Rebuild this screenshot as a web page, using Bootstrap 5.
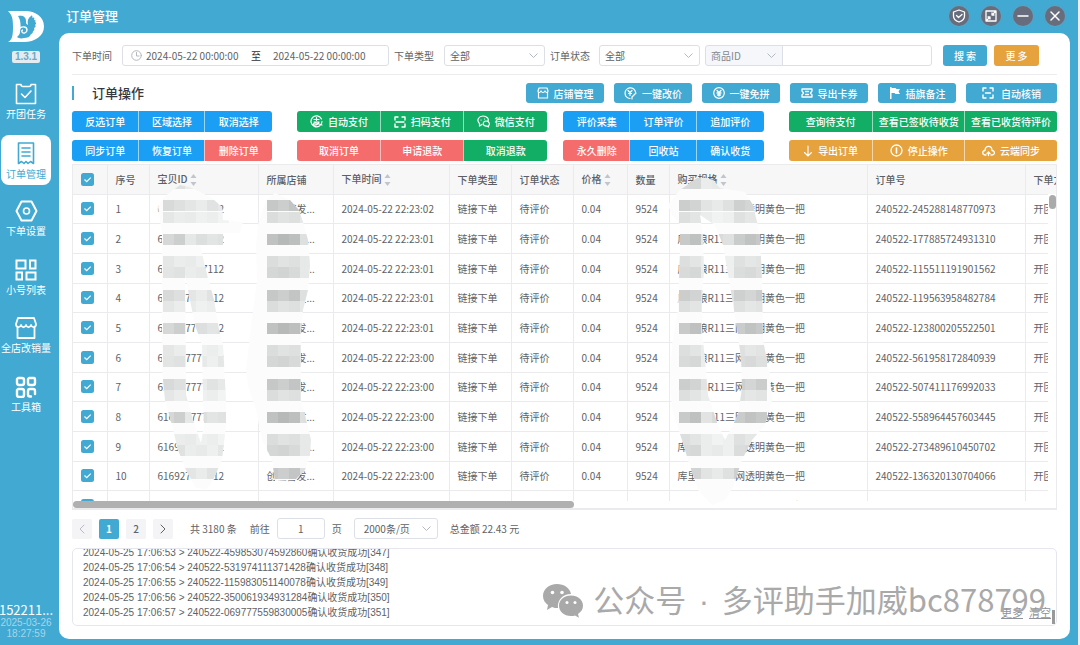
<!DOCTYPE html>
<html lang="zh-CN">
<head>
<meta charset="utf-8">
<meta name="viewport" content="width=device-width, initial-scale=1">
<title>订单管理</title>
<link rel="stylesheet" href="https://cdn.jsdelivr.net/npm/bootstrap@5.3.0/dist/css/bootstrap.min.css">
<style>
:root{--theme:#41a9d2;--line:#ebebed;--txt:#606266}
body{font:10px/15px "Noto Sans CJK SC",sans-serif;color:var(--txt);background:#eceef1}
button,input,select{font-family:inherit}
svg{display:block;flex:none}
.ic{fill:none;stroke:currentColor;stroke-width:1.6;stroke-linejoin:round;stroke-linecap:round}
.shell{min-height:100vh;background:var(--theme);margin-right:2px;overflow:hidden}
.side{width:59px;padding:0 7px 6px 0;color:#fff}
.logo{margin:10px 0 8px}
.ver{font:bold 10px/12px "Liberation Sans",sans-serif;background:#e4ecf1;color:#6aa9c8;border-radius:2px;width:28px}
.menu{height:343px;margin-top:13px}
.menu a{width:50px;height:50px;color:#fff;text-decoration:none;white-space:nowrap;border-radius:8px;line-height:14px;gap:2px;padding-top:7px}
.menu a.active{background:#fff;color:var(--theme)}
.acct{font-size:13px;line-height:14px;font-weight:400;white-space:nowrap}
.stamp{font:10px/11px "Liberation Sans",sans-serif;color:#a5d6ea}
.topbar{height:33px;padding:0 5px 2px 7px;color:#fff}
.topbar h1{font-size:13px;font-weight:500;line-height:18px}
.win{width:20px;height:20px;border-radius:50%;border:0;background:#676d7d;color:#fff;padding:0;box-shadow:0 0 2px #8a99a6}
.panel{background:#fff;border-radius:10px;margin:0 8px 6px 0;padding:12px 13px 13px;min-width:0}
.box,.form-select,.form-control{height:21px;min-height:21px;border:1px solid #dcdfe6;border-radius:3px;font-size:10px;line-height:15px;color:var(--txt);padding:0 5px}
.form-select{padding-right:18px;background-size:9px 9px;background-position:right 6px center;--bs-form-select-bg-img:url("data:image/svg+xml,%3csvg xmlns='http://www.w3.org/2000/svg' viewBox='0 0 9 9'%3e%3cpath fill='none' stroke='%23b4b8c0' d='M.5 2.5l4 4 4-4'/%3e%3c/svg%3e")}
.box input{border:0;padding:0;width:105px;color:var(--txt);outline:0;background:none}
.filters{padding-bottom:8px;border-bottom:1px solid #ececee}
.btn{font-size:10px;line-height:15px;font-weight:500;color:#fff;padding:0;border:0;border-radius:3px;height:21px;display:inline-flex;align-items:center;justify-content:center;gap:5px;white-space:nowrap;background:var(--c,var(--theme))}
.btn:hover{color:#fff;background:var(--c,var(--theme));opacity:.9}
.c-blue{--c:#1b9ff4}.c-green{--c:#12ae66}.c-red{--c:#f56c6c}.c-gold{--c:#e6a23c}
.tools .btn{height:20px;width:78px}
.tools .btn.w-auto2{width:91px;gap:7px}
.sect{font-size:13px;line-height:18px;font-weight:500;color:#35393f;padding-left:18px}
.bar{width:2px;height:14px;background:var(--theme)}
.btn-group>.btn{flex:1 1 0;border-left:1px solid #ffffff90}
.btn-group>.btn:first-child{border-left:0}
.btn-group>.btn.wide{flex-grow:1.1}
.g20{flex:200 1 0}.g25{flex:250 1 0}.g27{flex:268 1 0}
.gap-a{margin-right:25px}.gap-b{margin-right:16px}
.grid-wrap{height:346px;border:1px solid var(--line);border-width:1px 1px 2px;margin-top:3px}
.view{height:336px;overflow:hidden}
.orders{table-layout:fixed;width:1053px;height:356px;margin:0;color:var(--txt)}
.orders th,.orders td{padding:0 0 0 8px;height:29px;border:0;border-right:1px solid var(--line);border-bottom:1px solid var(--line);white-space:nowrap;overflow:hidden;vertical-align:middle;line-height:15px}
.orders th{background:#f7f7f8;font-weight:500;color:#5c5f66}
.orders th svg{display:inline-block;vertical-align:middle;margin-left:2px}
.orders td{font-weight:400}
.form-check-input{width:13px;height:13px;margin:0;float:none;display:block;border-radius:2px;border:0}
.form-check-input:checked[type=checkbox]{background-color:var(--theme);background-size:13px;background-image:url("data:image/svg+xml,%3csvg xmlns='http://www.w3.org/2000/svg' viewBox='0 0 13 13'%3e%3cpath fill='none' stroke='%23fff' stroke-width='1.2' d='M3.5 6.500l2.200 2.200 4-4'/%3e%3c/svg%3e")}
.mask{left:-73px;top:-165px;pointer-events:none}
.gutter{right:0;top:29px;width:8px;height:308px;background:#fff}
.vthumb{right:0;top:30px;width:7px;height:14px;border-radius:4px;background:#aaa}
.hthumb{height:7px;width:51%;border-radius:4px;background:#b0b0b0}
.pg{width:20px;height:20px;border:0;border-radius:2px;background:#f4f4f6;color:#606266;padding:0;font-weight:500;font-size:10px;line-height:20px;display:flex;align-items:center;justify-content:center}
.pg.on{background:var(--theme);color:#fff;font-weight:700}
.log{border:1px solid #e6e7ee;border-radius:5px;min-height:77px;font:10px/15px "Liberation Sans","Noto Sans CJK SC",sans-serif;margin-top:9px;padding:0 9px 4px 10px}
.log-lines{height:71px;overflow:hidden}
.wm{right:10px;bottom:5px;color:#a9a9a9;font:31px/36px "Noto Sans CJK SC",sans-serif;white-space:nowrap;gap:9px}
.wm .dot{font-family:"Liberation Sans",sans-serif;padding:0 4px}
.acts{right:5px;bottom:3px;gap:6px}
.acts a{color:#909399;font-size:11px;line-height:17px;text-decoration:underline}
.lthumb{right:1px;bottom:1px;width:3px;height:14px;background:#999}
</style>
</head>
<body>
<div class="shell d-flex">
  <aside class="side d-flex flex-column align-items-center flex-shrink-0">
    <svg class="logo" width="38" height="33" viewBox="0 0 38 33"><path fill="#fff" d="M1 1h17c11 0 19 6 19 15.500S28 32 17 32H1c4-2 5-6 5-15S5 5 1 1z"/><path fill="#41a9d2" d="M11 6c5-1 8 1 8 5 0 2 0 3 2 4-1-4 0-7 3-9 1-1 2 0 1 2 2-1 3 0 2 2 2 0 2 1 1 2 2 1 1 2 0 3 1 1 1 2-1 3 1 1 0 3-1 3 0 2-1 3-2 3-1 3-4 4-7 4-3 1-6 0-7-1 2-2 3-3 3-5 1-5 1-12-2-16z"/><path d="M12 19c2-3 8-3 8 1 0 3-4 4-5 2s1-2 1-2" fill="none" stroke="#fff" stroke-width="1.400"/></svg>
    <div class="ver text-center">1.3.1</div>
    <nav class="menu d-flex flex-column justify-content-between">
      <a href="#" class="d-flex flex-column align-items-center"><svg class="ic" width="22" height="22" viewBox="0 0 22 22"><path d="M1.500 1.500h4.500a2 2 0 0 0 2 2h6a2 2 0 0 0 2-2h4.500v19h-19zM6.500 11l3.500 3.500L16 8"/></svg>开团任务</a>
      <a href="#" class="active d-flex flex-column align-items-center"><svg class="ic" width="18" height="23" viewBox="0 0 18 23"><path d="M1.500 1h15v20.500l-3-2-2.500 2-2-2-2 2-2.500-2-3 2zM5 6h8M5 10h8M5 14h8"/></svg>订单管理</a>
      <a href="#" class="d-flex flex-column align-items-center"><svg class="ic" width="23" height="22" viewBox="0 0 23 22"><path stroke-width="2" d="M6.500 1.500h10l5 9.500-5 9.500h-10L1.500 11z"/><circle cx="11.500" cy="11" r="3"/></svg>下单设置</a>
      <a href="#" class="d-flex flex-column align-items-center"><svg class="ic" width="22" height="22" viewBox="0 0 22 22"><path stroke-width="2" stroke-linejoin="miter" d="M1.500 1.500h9v8h-9zM15 1.500h5.500v8H15zM1.500 13.500H7v7H1.500zM11.500 13.500h9v7h-9z"/></svg>小号列表</a>
      <a href="#" class="d-flex flex-column align-items-center"><svg class="ic" width="22" height="22" viewBox="0 0 22 22"><path stroke-width="1.800" d="M3 1h16l2 6c0 4-4 4-5 1-1 3-4 3-5 0-1 3-4 3-5 0-1 3-5 3-5-1zM2.500 10v11h17V10"/></svg>全店改销量</a>
      <a href="#" class="d-flex flex-column align-items-center"><svg class="ic" width="22" height="22" viewBox="0 0 22 22"><path stroke-width="2.400" d="M3 2h4q2 0 2 2v3q0 2-2 2H4Q2 9 2 7V3zM14 2h5q1 0 1 2v3q0 2-2 2h-3q-2 0-2-2V3zM3 13h4q2 0 2 2v4q0 2-2 2H4q-2 0-2-2v-5zM16 20.500h-1q-2 0-2-2V15q0-2 2-2h3q2 0 2 2v3"/></svg>工具箱</a>
    </nav>
    <div class="mt-auto text-center">
      <div class="acct">152211...</div>
      <div class="stamp">2025-03-26<br>18:27:59</div>
    </div>
  </aside>

  <div class="flex-grow-1 d-flex flex-column" style="min-width:0">
    <header class="topbar d-flex align-items-center justify-content-between">
      <h1 class="m-0">订单管理</h1>
      <div class="d-flex pe-2" style="gap:12px">
        <button class="win" aria-label="安全"><svg class="ic mx-auto" width="14" height="14" viewBox="0 0 14 14"><path stroke-width="1.300" d="M7 1l5.500 2v4c0 3-2.500 5-5.500 6-3-1-5.500-3-5.500-6V3zM4.500 6.500l2 2 3.500-3"/></svg></button>
        <button class="win" aria-label="缩放"><svg class="ic mx-auto" width="12" height="12" viewBox="0 0 12 12"><path stroke-width="1.300" d="M1 1h10v10H1zM3 7h2v2M9 5H7V3M7 5l3-3M5 7l-3 3"/></svg></button>
        <button class="win" aria-label="最小化"><svg class="ic mx-auto" width="12" height="12" viewBox="0 0 12 12"><path stroke-width="1.500" d="M1 6h10"/></svg></button>
        <button class="win" aria-label="关闭"><svg class="ic mx-auto" width="12" height="12" viewBox="0 0 12 12"><path stroke-width="1.500" d="M2 2l8 8M10 2l-8 8"/></svg></button>
      </div>
    </header>

    <main class="panel flex-grow-1 d-flex flex-column">
      <form class="filters d-flex align-items-center">
        <label for="from">下单时间</label>
        <div class="box d-flex align-items-center" style="margin:0 5px 0 10px;width:267px;padding:0 8px">
          <svg class="ic me-1" width="11" height="11" viewBox="0 0 11 11" style="color:#b4b8c0"><circle cx="5.500" cy="5.500" r="4.800" stroke-width="1"/><path stroke-width="1" d="M5.500 2.500V6H8"/></svg>
          <input id="from" value="2024-05-22 00:00:00"><span class="me-2" style="color:#303133">至</span>
          <input aria-label="结束时间" value="2024-05-22 00:00:00" class="ms-1">
        </div>
        <label for="kind">下单类型</label>
        <select id="kind" class="form-select" style="width:101px;margin:0 5px 0 10px"><option>全部</option></select>
        <label for="state">订单状态</label>
        <select id="state" class="form-select" style="width:101px;margin:0 5px 0 9px"><option>全部</option></select>
        <div class="input-group flex-nowrap" style="width:227px">
          <select class="form-select flex-grow-0" aria-label="搜索字段" style="width:78px;flex-basis:78px;background-color:#f5f7fa;color:#83868c"><option>商品ID</option></select>
          <input class="form-control" aria-label="关键词">
        </div>
        <button type="button" class="btn" style="width:44px;margin-left:11px">搜 索</button>
        <button type="button" class="btn c-gold" style="width:45px;margin-left:7px">更 多</button>
      </form>

      <div class="tools d-flex align-items-center" style="margin:8px 0">
        <span class="bar"></span><h2 class="sect m-0 me-auto">订单操作</h2>
        <div class="d-flex" style="gap:10px">
          <button class="btn"><svg class="ic" width="12" height="12" viewBox="0 0 12 12"><path stroke-width="1.200" d="M1 4l1-3h8l1 3c0 2-2 2-3 0-1 2-3 2-4 0-1 2-3 2-3 0zM1.500 5.500V11h9V5.500"/></svg>店铺管理</button>
          <button class="btn"><svg class="ic" width="13" height="13" viewBox="0 0 13 13"><path stroke-width="1.200" d="M6 11.500A5.300 5.300 0 1 1 11.500 5M4 3.500l2 2 2-2M6 5.500v3M4.500 6.500h3M8 12V10l4-4"/></svg>一键改价</button>
          <button class="btn"><svg class="ic" width="12" height="12" viewBox="0 0 12 12"><circle cx="6" cy="6" r="5.300" stroke-width="1.200"/><path stroke-width="1.300" d="M4 3.500l2 2 2-2M6 5.500v3.500M4 6h4M4.500 8h3"/></svg>一键免拼</button>
          <button class="btn"><svg class="ic" width="12" height="12" viewBox="0 0 12 12"><path stroke-width="1.300" d="M1 2h10v2L9.500 6 11 8v2H1V8l1.500-2L1 4zM4.500 4.500h3M4.500 7.500h3"/></svg>导出卡券</button>
          <button class="btn"><svg width="12" height="12" viewBox="0 0 12 12"><path fill="#fff" d="M1 0h1.500v1h4l1 1H11L9.500 4.500 11 7H6.500l-1-1h-3v6H1z"/></svg>插旗备注</button>
          <button class="btn w-auto2"><svg class="ic" width="12" height="12" viewBox="0 0 12 12"><path stroke-width="1.400" d="M1 4V1h3M8 1h3v3M11 8v3H8M4 11H1V8M3.500 6h5"/></svg>自动核销</button>
        </div>
      </div>

      <div class="d-flex" style="margin-bottom:8px">
        <div class="btn-group g20 gap-a"><button class="btn c-blue">反选订单</button><button class="btn c-blue">区域选择</button><button class="btn c-blue">取消选择</button></div>
        <div class="btn-group g25 gap-b">
          <button class="btn c-green"><svg class="ic" width="13" height="13" viewBox="0 0 13 13"><path stroke-width="1.200" d="M11.500 4A5.500 5.500 0 1 0 12 6.500M4 4.500h5M6.500 2.500v3M4 7h5c-1 3-3 3-4.500 3S3 8 5 8s4 1 7 2"/></svg>自动支付</button>
          <button class="btn c-green"><svg class="ic" width="12" height="12" viewBox="0 0 12 12"><path stroke-width="1.400" d="M1 4V1h3M8 1h3v3M11 8v3H8M4 11H1V8M2 6h8"/></svg>扫码支付</button>
          <button class="btn c-green"><svg class="ic" width="13" height="13" viewBox="0 0 13 13"><path stroke-width="1.200" d="M5 9.500L2.500 11V8.500C-1 5 2 1 6 1s6 3 5 5M4 5h.1M7.500 4h.1M9 6c4 0 4 4 2.500 4.500V12L10 11C5 11.500 5.500 6 9 6z"/></svg>微信支付</button>
        </div>
        <div class="btn-group g20 gap-a"><button class="btn c-blue">评价采集</button><button class="btn c-blue">订单评价</button><button class="btn c-blue">追加评价</button></div>
        <div class="btn-group g27"><button class="btn c-green">查询待支付</button><button class="btn c-green wide">查看已签收待收货</button><button class="btn c-green wide">查看已收货待评价</button></div>
      </div>
      <div class="d-flex">
        <div class="btn-group g20 gap-a"><button class="btn c-blue">同步订单</button><button class="btn c-blue">恢复订单</button><button class="btn c-red">删除订单</button></div>
        <div class="btn-group g25 gap-b"><button class="btn c-red">取消订单</button><button class="btn c-red">申请退款</button><button class="btn c-green">取消退款</button></div>
        <div class="btn-group g20 gap-a"><button class="btn c-red">永久删除</button><button class="btn c-blue">回收站</button><button class="btn c-blue">确认收货</button></div>
        <div class="btn-group g27">
          <button class="btn c-gold"><svg class="ic" width="10" height="12" viewBox="0 0 10 12"><path stroke-width="1.100" d="M5 1v10M1.500 7.500L5 11l3.500-3.500"/></svg>导出订单</button>
          <button class="btn c-gold wide"><svg class="ic" width="13" height="13" viewBox="0 0 13 13"><circle cx="6.500" cy="6.500" r="5.500" stroke-width="1.300"/><path d="M6.500 4v5"/></svg>停止操作</button>
          <button class="btn c-gold wide"><svg class="ic" width="13" height="12" viewBox="0 0 13 12"><path stroke-width="1.300" d="M4 10H3C0 9.500 0 6 3 5.500 3 0 10 0 10 5.500 13.500 6 13 10 10 10H9M6.500 10.500V7M5 8.500L6.500 7 8 8.500"/></svg>云端同步</button>
        </div>
      </div>

      <div class="grid-wrap position-relative overflow-hidden">
        <div class="view">
          <table class="table orders">
            <colgroup><col style="width:34px"><col style="width:42px"><col style="width:109px"><col style="width:75px"><col style="width:116px"><col style="width:62px"><col style="width:62px"><col style="width:54px"><col style="width:42px"><col style="width:198px"><col style="width:158px"><col></colgroup>
            <thead><tr>
              <th><input type="checkbox" class="form-check-input" checked aria-label="全选"></th><th>序号</th><th data-sort>宝贝ID</th><th>所属店铺</th><th data-sort>下单时间</th><th>下单类型</th><th>订单状态</th><th data-sort>价格</th><th>数量</th><th data-sort>购买规格</th><th>订单号</th><th>下单方式</th>
            </tr></thead>
            <tbody id="rows"></tbody>
          </table>
        </div>
        <div class="gutter position-absolute"></div>
        <div class="vthumb position-absolute"></div>
        <svg class="mask position-absolute" width="800" height="510" viewBox="0 0 800 510" id="mask" aria-hidden="true">
          <defs>
            <clipPath id="cA"><path clip-rule="evenodd" d="M158 207L164 197 180 185 190 187 212 198 222 207 223 220 243 222 240 233 223 233V245H200L206 270 214 300 219 330 223 345 226 400V425L222 460 213 480 207 489 196 488 186 470 178 450 172 425 165 400 162 370V233zM185 275L190 300 195 325 202 345 203 400 204 425 201 443 193 420 186 395z"/></clipPath>
            <clipPath id="cB"><path d="M275 193L290 200 299 210 303 222 308 240 310 265 308 290 303 310 301 330V400L305 415 311 440 310 455 305 470 295 480 275 481 272 460 262 440 256 410 248 385 246 370 250 335 257 280 256 245 258 225 266 200z"/></clipPath>
            <clipPath id="cC"><path clip-rule="evenodd" d="M680 190L668 205 672 215 680 224V250L678 310 672 345 670 375 672 410 682 440 688 460 698 490 712 505 725 500 733 487 742 460 752 440 765 425 772 400 770 375 763 340 762 280 760 235 753 205 745 192 720 188 713 180 700 176zM700 215L715 225 723 245 727 268 732 298 737 328 741 358 742 388 738 415 725 440 718 425 708 395 705 360 702 330V300L704 270 703 235z"/></clipPath>
          </defs>
        </svg>
        <div class="hthumb"></div>
      </div>

      <div class="d-flex align-items-center" style="margin-top:8px">
        <button class="pg" aria-label="上一页" disabled><svg class="ic" width="6" height="10" viewBox="0 0 6 10" style="color:#b9bcc4"><path stroke-width="1" d="M5 1L1 5l4 4"/></svg></button>
        <button class="pg on" style="margin-left:7px">1</button>
        <button class="pg" style="margin-left:7px">2</button>
        <button class="pg" aria-label="下一页" style="margin-left:7px"><svg class="ic" width="6" height="10" viewBox="0 0 6 10"><path stroke-width="1" d="M1 1l4 4-4 4"/></svg></button>
        <span style="margin:0 13px 0 17px">共 3180 条</span>
        <label for="page">前往</label>
        <input id="page" class="form-control text-center" value="1" style="width:48px;margin:0 7px">
        <span>页</span>
        <select class="form-select" aria-label="每页条数" style="width:84px;margin:0 12px;padding-left:9px"><option>2000条/页</option></select>
        <span>总金额 22.43 元</span>
      </div>

      <section class="log position-relative flex-grow-1 d-flex flex-column">
        <div class="log-lines d-flex flex-column justify-content-end">
          <div>2024-05-25 17:06:53 &gt; 240522-459853074592860确认收货成功[347]</div>
          <div>2024-05-25 17:06:54 &gt; 240522-531974111371428确认收货成功[348]</div>
          <div>2024-05-25 17:06:55 &gt; 240522-115983051140078确认收货成功[349]</div>
          <div>2024-05-25 17:06:56 &gt; 240522-350061934931284确认收货成功[350]</div>
          <div>2024-05-25 17:06:57 &gt; 240522-069777559830005确认收货成功[351]</div>
        </div>
        <div class="acts position-absolute d-flex"><a href="#">更多</a><a href="#">清空</a></div>
        <div class="lthumb position-absolute"></div>
        <div class="wm position-absolute d-flex align-items-center pe-none">
          <svg width="42" height="36" viewBox="0 0 42 36"><path fill="#a9a9a9" d="M15 1C7 1 1 6 1 13c0 4 2 7 5 9l-1 5 5-3c2 1 4 1 6 1-1-8 5-14 13-14C28 5 22 1 15 1z"/><path fill="#a9a9a9" d="M29 12.500c-7 0-12 4.500-12 10.200S22 33 29 33c1.500 0 3-.300 4-.600l4 2.400-1-3.800c3-2 5-5 5-8.300 0-5.700-5-10.200-12-10.200z"/><g fill="#fff"><circle cx="10.500" cy="9.500" r="1.800"/><circle cx="20" cy="9.500" r="1.800"/><circle cx="25" cy="19.500" r="1.500"/><circle cx="33" cy="19.500" r="1.500"/></g></svg>
          <span>公众号<span class="dot"> · </span>多评助手加威bc878799</span>
        </div>
      </section>
    </main>
  </div>
</div>
<script src="https://cdn.jsdelivr.net/npm/bootstrap@5.3.0/dist/js/bootstrap.bundle.min.js"></script>
<script>
const orders = [
  ['02','245288148770973'],['01','177885724931310'],['01','115511191901562'],['01','119563958482784'],
  ['01','123800205522501'],['00','561958172840939'],['00','507411176992033'],['00','558964457603445'],
  ['00','273489610450702'],['00','136320130704066'],['00','136320130704067']
];
document.getElementById('rows').innerHTML = orders.map(([sec, no], i) => `<tr>
  <td><input type="checkbox" class="form-check-input" checked aria-label="选择第${i + 1}行"></td>
  <td>${i + 1}</td><td>616927777112</td><td>创佳首发...</td><td>2024-05-22 22:23:${sec}</td>
  <td>链接下单</td><td>待评价</td><td>0.04</td><td>9524</td><td>库里狼R11三网透明黄色一把</td>
  <td>240522-${no}</td><td>开团下单</td></tr>`).join('');
document.querySelectorAll('th[data-sort]').forEach(th => th.insertAdjacentHTML('beforeend',
  '<svg width="7" height="14" viewBox="0 0 7 14"><path fill="#c0c4cc" d="M3.500 1L6.500 5h-6zM3.500 13L.5 9h6z"/></svg>'));

// Privacy mosaic: bands of 11px cells, [top, strength] per band
const bands = [[178,2],[200,3],[212,1],[234,4],[256,1],[267,2],[290,3],[301,1],[323,4],[345,1],[356,2],[379,3],[390,1],[412,4],[434,1],[445,2],[468,3]];
const tone = (base, n, k) => { const v = Math.round(base - n * 10 - k); return `rgb(${v},${v + 1},${v + 1})`; };
function mosaic(clip, runs) {
  let s = `<g clip-path="url(#${clip})" shape-rendering="crispEdges"><path fill="#fcfcfc" d="M0 180h800v330H0z"/>`;
  for (const [x0, count, base, mul] of runs)
    for (const [y, n] of bands)
      for (let c = 0; c < count; c++)
        s += `<rect x="${x0 + c * 11}" y="${y}" width="11" height="11" fill="${tone(base, n * mul, [0, 9, 3, 6][(c + n) % 4])}"/>`;
  document.getElementById('mask').insertAdjacentHTML('beforeend', s + '</g>');
}
mosaic('cA', [[163, 2, 246, .8], [185, 4, 246, .4]]);
mosaic('cB', [[267, 3, 240, 1.2], [300, 1, 246, .6]]);
mosaic('cC', [[679, 2, 240, 1], [701, 3, 250, .6], [734, 3, 242, 1]]);
</script>
</body>
</html>
